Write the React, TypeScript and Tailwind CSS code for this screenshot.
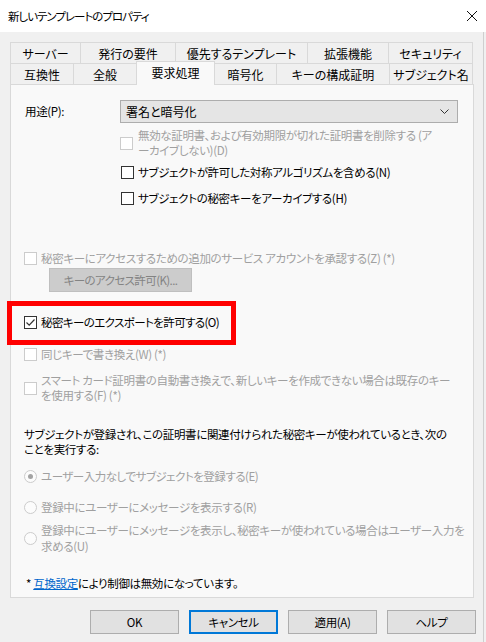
import React from 'react';

const font = "font-['Noto_Sans_CJK_JP',sans-serif] [font-feature-settings:'palt']";

const topTabs = [
  { label: 'サーバー', w: 'w-[70px]' },
  { label: '発行の要件', w: 'w-[95px]' },
  { label: '優先するテンプレート', w: 'w-[132px]' },
  { label: '拡張機能', w: 'w-[81px]' },
  { label: 'セキュリティ', w: 'w-[85px]' },
];

const bottomTabs = [
  { label: '互換性', w: 'w-[63px]' },
  { label: '全般', w: 'w-[63px]' },
  { label: '要求処理', w: 'w-[79px]', active: true },
  { label: '暗号化', w: 'w-[61px]' },
  { label: 'キーの構成証明', w: 'w-[113px]' },
  { label: 'サブジェクト名', w: 'w-[84px]' },
];

const Box: React.FC<{ checked?: boolean; disabled?: boolean }> = ({ checked, disabled }) => (
  <div
    className={`w-[13px] h-[13px] shrink-0 border bg-white flex items-center justify-center ${
      disabled ? 'border-[#cccccc]' : 'border-[#333333]'
    }`}
  >
    {checked && (
      <svg width="11" height="11" viewBox="0 0 11 11">
        <path d="M1.5 5.5 L4.2 8.2 L9.5 2.5" fill="none" stroke="#333333" strokeWidth="1.2" />
      </svg>
    )}
  </div>
);

const Radio: React.FC<{ checked?: boolean }> = ({ checked }) => (
  <div className="w-[13px] h-[13px] shrink-0 rounded-full border border-[#cccccc] bg-[#fcfcfc] flex items-center justify-center">
    {checked && <div className="w-[5px] h-[5px] rounded-full bg-[#a3a3a3]" />}
  </div>
);

const Btn: React.FC<{ label: string; def?: boolean }> = ({ label, def }) => (
  <button
    className={`w-[89px] h-[24px] bg-[#e1e1e1] text-[11.5px] tracking-[-0.35px] text-black flex items-center justify-center ${
      def ? 'border-2 border-[#0078d7]' : 'border border-[#adadad]'
    }`}
  >
    {label}
  </button>
);

export default function App() {
  return (
    <div className={`w-[486px] h-[642px] bg-[#f0f0f0] relative overflow-hidden text-black leading-[15px] ${font}`}>
      {/* title bar */}
      <div className="h-[32px] bg-white flex items-center justify-between pl-[8px] pr-[6px]">
        <span className="text-[11.5px] tracking-[-1px]">新しいテンプレートのプロパティ</span>
        <svg width="12" height="12" viewBox="0 0 12 12" className="mr-[2px]">
          <path d="M1 1 L11 11 M11 1 L1 11" stroke="#111" strokeWidth="1" />
        </svg>
      </div>

      {/* tabs */}
      <div className="mt-[10px] px-[10px] text-[12px]">
        <div className="flex h-[21px]">
          {topTabs.map((t, i) => (
            <div
              key={t.label}
              className={`${t.w} h-full flex items-center justify-center border-t border-l border-[#d9d9d9] ${
                i === topTabs.length - 1 ? 'border-r' : ''
              }`}
            >
              {t.label}
            </div>
          ))}
        </div>
        <div className="flex h-[21px] items-end">
          {bottomTabs.map((t, i) =>
            t.active ? (
              <div
                key={t.label}
                className={`${t.w} h-[24px] -mb-[1px] relative z-10 bg-[#f9f9f9] flex items-start pt-[3px] justify-center border-t border-l border-r border-[#d9d9d9]`}
              >
                {t.label}
              </div>
            ) : (
              <div
                key={t.label}
                className={`${t.w} h-full flex items-center justify-center border-t border-[#d9d9d9] ${
                  i === 0 || !bottomTabs[i - 1].active ? 'border-l' : ''
                } ${i === bottomTabs.length - 1 ? 'border-r' : ''}`}
              >
                {t.label}
              </div>
            )
          )}
        </div>
      </div>

      {/* panel */}
      <div className="mx-[10px] w-[464px] h-[514px] border border-[#d9d9d9] bg-[#f9f9f9] text-[11.5px] tracking-[-0.35px] pl-[13px]">
        <div className="mt-[15px] flex items-center h-[23px]">
          <span className="w-[96px] pl-[1px]">用途(P):</span>
          <div className="w-[338px] h-[23px] bg-[#e5e5e5] border border-[#adadad] flex items-center justify-between pl-[5px] pr-[8px]">
            <span className="text-[12px] tracking-normal">署名と暗号化</span>
            <svg width="9" height="5" viewBox="0 0 9 5">
              <path d="M0.5 0.5 L4.5 4.5 L8.5 0.5" fill="none" stroke="#333" strokeWidth="1" />
            </svg>
          </div>
        </div>

        <div className="mt-[5px] ml-[96px] flex items-center gap-[5px] text-[#a0a0a0]">
          <Box disabled />
          <span className="whitespace-nowrap">
            無効な証明書、および有効期限が切れた証明書を削除する (ア
            <br />
            ーカイブしない)(D)
          </span>
        </div>

        <div className="mt-[6px] ml-[97px] h-[16px] flex items-center gap-[4px]">
          <Box />
          <span>サブジェクトが許可した対称アルゴリズムを含める(N)</span>
        </div>

        <div className="mt-[10px] ml-[97px] h-[16px] flex items-center gap-[4px]">
          <Box />
          <span>サブジェクトの秘密キーをアーカイブする(H)</span>
        </div>

        <div className="mt-[44px] h-[16px] flex items-center gap-[4px] text-[#a0a0a0]">
          <Box disabled />
          <span>秘密キーにアクセスするための追加のサービス アカウントを承認する(Z) (*)</span>
        </div>

        <div className="mt-[2px] ml-[25px] w-[143px] h-[24px] bg-[#cccccc] border border-[#bfbfbf] text-[#838383] flex items-center justify-center tracking-[-0.6px]">
          キーのアクセス許可(K)...
        </div>

        <div className="mt-[22px] h-[16px] flex items-center gap-[4px]">
          <Box checked />
          <span className="tracking-[-0.6px]">秘密キーのエクスポートを許可する(O)</span>
        </div>

        <div className="mt-[16px] h-[16px] flex items-center gap-[4px] text-[#a0a0a0]">
          <Box disabled />
          <span>同じキーで書き換え(W) (*)</span>
        </div>

        <div className="mt-[11px] flex items-center gap-[4px] text-[#a0a0a0]">
          <Box disabled />
          <span className="whitespace-nowrap">
            スマート カード証明書の自動書き換えで、新しいキーを作成できない場合は既存のキー
            <br />
            を使用する(F) (*)
          </span>
        </div>

        <div className="mt-[24px] whitespace-nowrap">
          サブジェクトが登録され、この証明書に関連付けられた秘密キーが使われているとき、次の
          <br />
          ことを実行する:
        </div>

        <div className="mt-[11px] h-[16px] flex items-center gap-[4px] text-[#a0a0a0]">
          <Radio checked />
          <span className="tracking-[-0.5px]">ユーザー入力なしでサブジェクトを登録する(E)</span>
        </div>

        <div className="mt-[15px] h-[16px] flex items-center gap-[4px] text-[#a0a0a0]">
          <Radio />
          <span>登録中にユーザーにメッセージを表示する(R)</span>
        </div>

        <div className="mt-[7px] flex items-center gap-[4px] text-[#a0a0a0] leading-[16px]">
          <Radio />
          <span className="whitespace-nowrap">
            登録中にユーザーにメッセージを表示し、秘密キーが使われている場合はユーザー入力を
            <br />
            求める(U)
          </span>
        </div>

        <div className="mt-[21px] h-[16px] flex items-center pl-[2px]">
          <span>*&nbsp;</span>
          <span className="text-[#0066cc] underline">互換設定</span>
          <span>により制御は無効になっています。</span>
        </div>
      </div>

      {/* buttons */}
      <div className="mt-[12px] flex justify-end gap-[10px] pr-[10px]">
        <Btn label="OK" />
        <Btn label="キャンセル" def />
        <Btn label="適用(A)" />
        <Btn label="ヘルプ" />
      </div>

      {/* window edge */}
      <div className="absolute right-[2px] top-[32px] bottom-0 w-px bg-[#cfcfcf]" />

      {/* red annotation */}
      <div className="absolute left-[7px] top-[301px] w-[229px] h-[44px] border-[5px] border-[#ff0000]" />
    </div>
  );
}
